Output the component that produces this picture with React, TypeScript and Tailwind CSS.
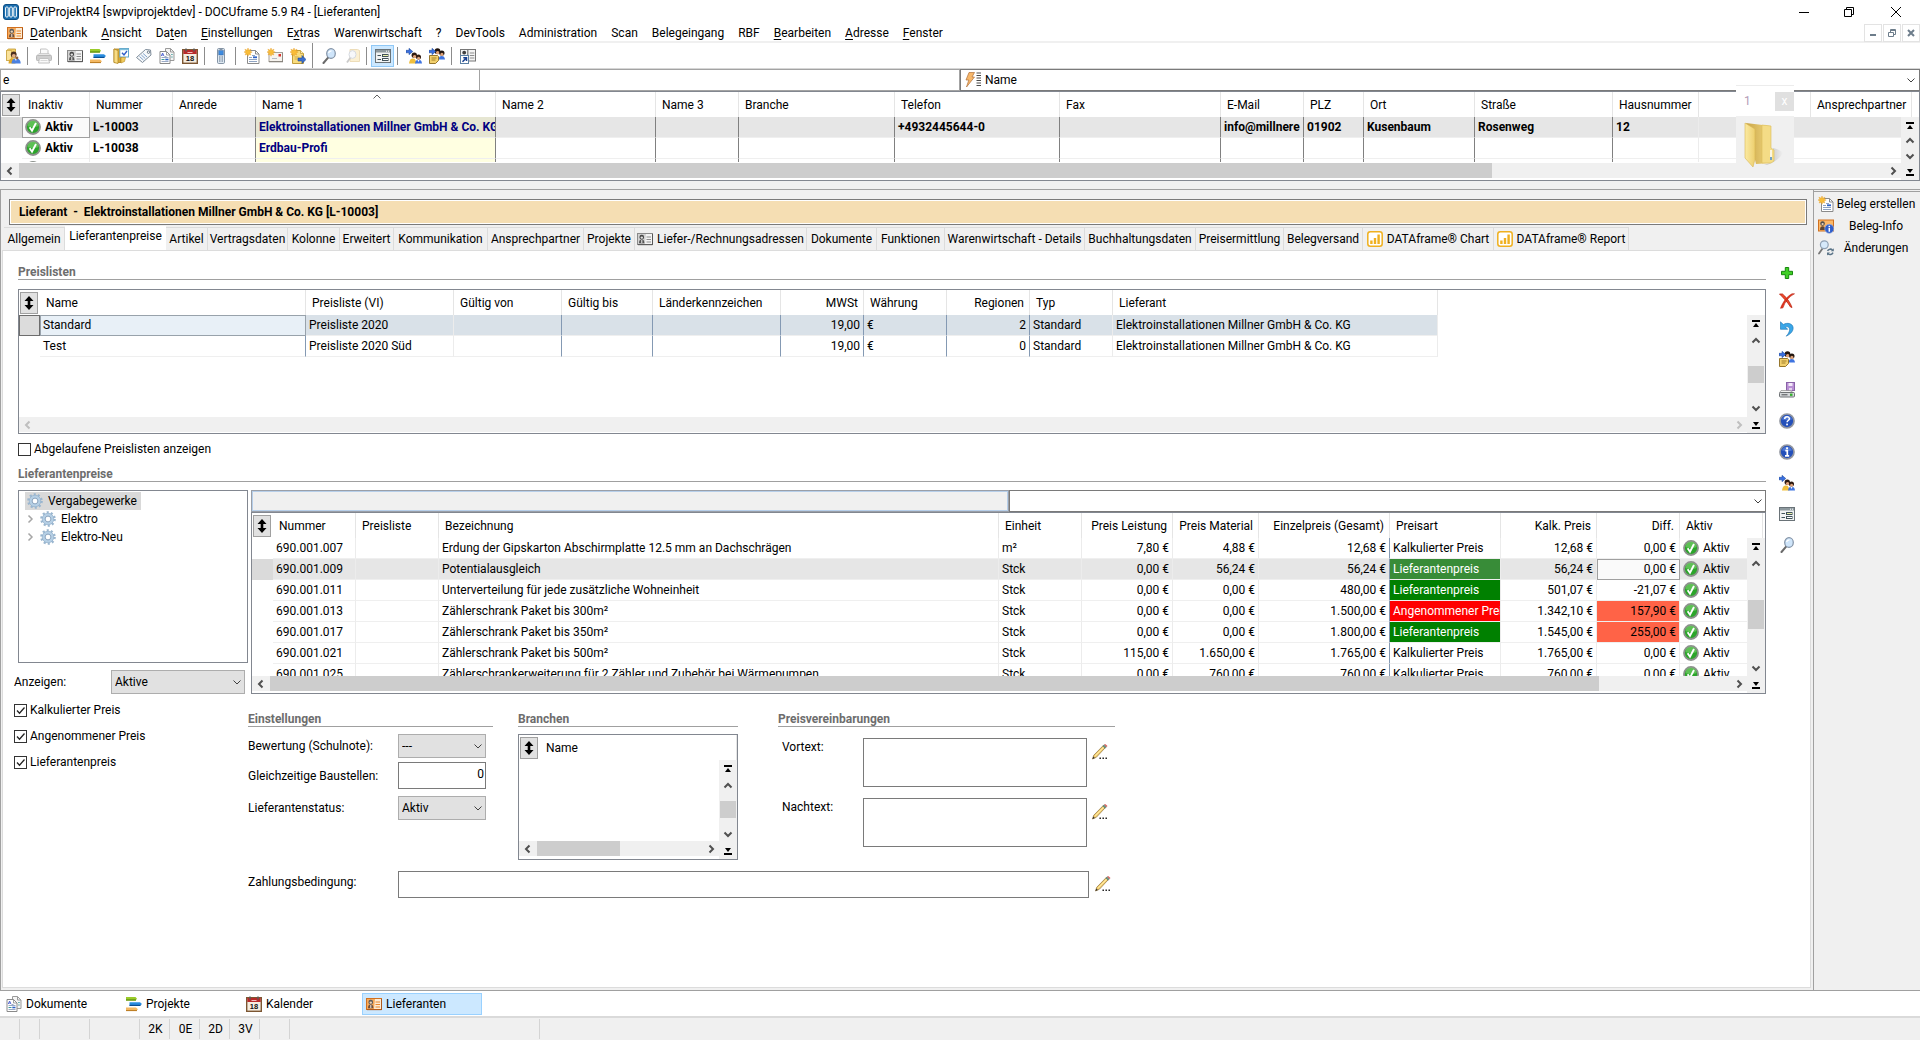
import { useId } from "react";
import type { ReactNode } from "react";

/* ---------- icons ---------- */

type IconProps = { children: ReactNode; size?: string; className?: string };

function Svg({ children, size = "size-4", className = "" }: IconProps) {
  return (
    <svg viewBox="0 0 16 16" aria-hidden="true" className={`${size} shrink-0 ${className}`}>
      {children}
    </svg>
  );
}

const AppIcon = () => (
  <Svg>
    <rect x="0.5" y="0.5" width="15" height="15" rx="2.5" fill="#1b6fb0" stroke="#0d4f86" />
    <rect x="2.6" y="3" width="2.6" height="10" rx="1" fill="#1b6fb0" stroke="#fff" strokeWidth="1" />
    <rect x="6.7" y="3" width="2.6" height="10" rx="1" fill="#1b6fb0" stroke="#fff" strokeWidth="1" />
    <rect x="10.8" y="3" width="2.6" height="10" rx="1" fill="#1b6fb0" stroke="#fff" strokeWidth="1" />
  </Svg>
);

const CardOrangeIcon = () => (
  <Svg>
    <rect x="0.5" y="2.5" width="15" height="11" fill="#fdebd3" stroke="#d0701f" />
    <path d="M1 3h8l-1 10H1z" fill="#f6a95a" />
    <rect x="2.500" y="3.800" width="4.500" height="4.700" rx="2" fill="#5c5c5c" />
    <path d="M2 12.300c0-2.800 1-3.800 2.700-3.800s2.700 1 2.700 3.800z" fill="#6b5040" />
    <circle cx="4.800" cy="6.600" r="1.200" fill="#ecd2b8" />
    <path d="M4.800 9v3" stroke="#f2e6da" />
    <path d="M9.500 6h4.500M9.500 8.500h4.500M9.500 11h4.500" stroke="#e8862c" />
    <path d="M1 13.700h14.500V3" fill="none" stroke="#a3521a" strokeWidth="0.800" />
  </Svg>
);

const CardIcon = () => (
  <Svg>
    <rect x="0.5" y="2.5" width="15" height="11" fill="#f4f4f4" stroke="#8a8a8a" />
    <path d="M1 3h8l-1 10H1z" fill="#d2d2d2" />
    <rect x="2.500" y="3.800" width="4.500" height="4.700" rx="2" fill="#484848" />
    <path d="M2 12.300c0-2.800 1-3.800 2.700-3.800s2.700 1 2.700 3.800z" fill="#555" />
    <circle cx="4.800" cy="6.600" r="1.200" fill="#e2e2e2" />
    <path d="M4.800 9v3" stroke="#eee" />
    <path d="M9.500 6h4.500M9.500 8.500h4.500M9.500 11h4.500" stroke="#8d8d8d" />
    <path d="M1 13.700h14.500V3" fill="none" stroke="#4e4e4e" strokeWidth="0.900" />
  </Svg>
);

const UserFolderIcon = () => (
  <Svg>
    <path d="M1.500 2.500l2-1.500h7v11.500h-9z" fill="#f3d06a" stroke="#c19a35" strokeWidth="0.800" />
    <path d="M1.500 2.500h5v10h-5z" fill="#fae29a" stroke="#c19a35" strokeWidth="0.600" />
    <path d="M3.500 15.500c.3-4 1.500-5 3.500-5s3 1 3.500 5z" fill="#dca62c" />
    <circle cx="8.700" cy="6.500" r="2.900" fill="#4a2f20" />
    <circle cx="8.800" cy="7.800" r="1.900" fill="#e3ae83" />
    <path d="M6.500 15.500c.3-4 2-5 4.500-5s4.500 1 4.700 5z" fill="#4a80e0" />
    <path d="M9.500 10.500l1.500 2.500 1-2.500z" fill="#f4f4f4" />
    <circle cx="12" cy="10" r="1.400" fill="#8b5a3c" />
  </Svg>
);

const PrinterIcon = () => (
  <Svg>
    <path d="M4.500 6V1h6l1.500 1.500V6" fill="#fafafa" stroke="#c2c2c2" />
    <path d="M1 7.500L3 5.500h10l2 2z" fill="#e6e6e6" stroke="#c2c2c2" strokeWidth="0.700" />
    <rect x="0.500" y="7.500" width="15" height="5" rx="0.800" fill="#cfcfcf" stroke="#b8b8b8" />
    <path d="M3.500 10.500h9l1 4.500h-11z" fill="#fafafa" stroke="#c2c2c2" />
    <path d="M4.500 12.500h7" stroke="#d9d9d9" />
  </Svg>
);

const GanttIcon = () => (
  <Svg>
    <path d="M0 1h9.500l1.500 1.800-1.500 1.700H0z" fill="#9acb2a" />
    <path d="M0 4h10" stroke="#5d8a0d" strokeWidth="1.200" />
    <path d="M3.500 6.200h10.500l2 1.800-2 1.800H3.500z" fill="#2a8de0" />
    <path d="M3.500 9.400h11" stroke="#0b4f93" strokeWidth="1.200" />
    <path d="M0 11.500h10l2 1.700-2 1.800H0z" fill="#f3b862" />
    <path d="M0 14.600h11" stroke="#b97a1f" />
  </Svg>
);

const FolderCheckIcon = () => (
  <Svg>
    <path d="M1 1h7v13.500H1z" fill="#d9aa38" stroke="#a87f22" strokeWidth="0.800" />
    <path d="M1 1l4 1.500v13L1 14.500z" fill="#f8dc85" stroke="#b58a24" strokeWidth="0.800" />
    <rect x="6.800" y="0.500" width="8.700" height="8.500" fill="#fff" stroke="#62a5c9" />
    <path d="M7 1.500h8.500" stroke="#7fc0dc" strokeWidth="1.400" />
    <path d="M9 4.700l2 2.300 3-4" fill="none" stroke="#2f5ec9" strokeWidth="1.400" />
    <path d="M8 9.500h4.500l-1 4-3.500 1.500z" fill="#f0cb5c" stroke="#b58a24" strokeWidth="0.600" />
  </Svg>
);

const TagIcon = () => (
  <Svg>
    <path d="M9.500 1.500l5 .5.500 5L6.500 14.500l-6-5z" fill="#f6f8fa" stroke="#7d8b99" />
    <circle cx="12.500" cy="4.200" r="1.200" fill="#fff" stroke="#6a7a8a" />
    <path d="M3.500 8.500l4 3.600M5.300 7l4 3.600M7.100 5.500l4 3.600" stroke="#7fa2cc" />
  </Svg>
);

const DocsIcon = () => (
  <Svg>
    <path d="M6.500.5h5l3.500 3.500v8.500H6.500z" fill="#f4f4f4" stroke="#9a9a9a" />
    <path d="M11.500.5V4H15" fill="none" stroke="#9a9a9a" />
    <path d="M1 3.500h6.500l3.500 3.500v8.500H1z" fill="#fff" stroke="#8a8a8a" />
    <path d="M7.500 3.500V7H11" fill="none" stroke="#8a8a8a" strokeWidth="0.800" />
    <path d="M2.300 8l1.300-3 1.300 3M2.800 7h1.600" fill="none" stroke="#4a5fd0" strokeWidth="0.900" />
    <path d="M5.500 8.500h2M2.500 9.500h7M2.500 13.500h7" stroke="#9aa9c4" />
    <path d="M2.500 11.500h3" stroke="#3a9a9a" />
    <path d="M6.300 11.500h3.200" stroke="#2c62c8" strokeWidth="1.600" />
    <path d="M12.200 6.500h1.500M12.200 9h1.500" stroke="#51a3a3" />
  </Svg>
);

const CalendarIcon = () => (
  <Svg>
    <rect x="0.700" y="1.700" width="14.600" height="13.600" fill="#f5ede0" stroke="#7c5632" strokeWidth="1.400" />
    <rect x="1.300" y="2" width="13.400" height="4" fill="#b82a2a" />
    <path d="M4 .5v3M12 .5v3" stroke="#5b5b5b" strokeWidth="1.500" />
    <path d="M5.500 4.500h5" stroke="#f2b9b9" />
    <text x="8" y="13" textAnchor="middle" fontSize="7.500" fontWeight="bold" fontFamily="Liberation Sans, sans-serif" fill="#111">
      18
    </text>
  </Svg>
);

const PhoneIcon = () => (
  <Svg>
    <rect x="4.500" y="0.500" width="7" height="15" rx="1.200" fill="#dfe9f2" stroke="#8494a5" />
    <path d="M6.500 1.500h3" stroke="#8494a5" />
    <rect x="5.800" y="2.700" width="4.400" height="4.300" fill="#3d8be0" stroke="#2c5c99" strokeWidth="0.500" />
    <path d="M6 9h1M7.500 9h1M9 9h1M6 11h1M7.500 11h1M9 11h1M6 13h1M7.500 13h1M9 13h1" stroke="#5d7288" />
  </Svg>
);

const Star = () => (
  <path d="M4 0l.8 2.200L7 1.200l-1 2.100 2.200.7-2.200.9.9 2.100-2.100-.8L4 8.200l-.8-2L1.100 7l.9-2.100L0 4l1.900-.7-1-2.100 2.300 1z" fill="#f9bd38" stroke="#e69a1c" strokeWidth="0.400" />
);

const NewDocIcon = () => (
  <Svg>
    <path d="M3.500 2.500h8l3.500 3.500v9.500H3.500z" fill="#fff" stroke="#8b8b8b" />
    <path d="M11.500 2.500V6H15" fill="none" stroke="#8b8b8b" />
    <path d="M8 7.500h3M5 9.500h3M5 11.500h8M5 13.500h8" stroke="#8ea3c2" />
    <path d="M9 9.300h4" stroke="#2c62c8" strokeWidth="1.800" />
    <Star />
  </Svg>
);

const NewMailIcon = () => (
  <Svg>
    <rect x="2" y="4.500" width="13.500" height="9" fill="#f6f3ee" stroke="#a5a19a" />
    <path d="M2 13.800h14V5" fill="none" stroke="#77736c" strokeWidth="0.800" />
    <rect x="11.500" y="6" width="2.500" height="2.500" fill="#d8352c" />
    <path d="M5 10.500h5" stroke="#b3bac2" />
    <Star />
  </Svg>
);

const NewNoteIcon = () => (
  <Svg>
    <path d="M2.500 2.500h8l3 3v10h-11z" fill="#f8dc7e" stroke="#c29d3b" />
    <path d="M10.500 2.500v3h3" fill="#fff1b8" stroke="#c29d3b" strokeWidth="0.800" />
    <path d="M4.500 9h4M4.500 11h3" stroke="#d1aa45" />
    <path d="M8 10h4V7.500l4 4-4 4V13H8z" fill="#3b6fd0" stroke="#1d468f" strokeWidth="0.600" />
    <Star />
  </Svg>
);

const MagnifierIcon = () => (
  <Svg>
    <path d="M7.300 9.300L2.500 15" stroke="#6a6a6a" strokeWidth="2" strokeLinecap="round" />
    <ellipse cx="10" cy="5.500" rx="4.300" ry="4.800" fill="#cfe5fa" stroke="#8292a6" strokeWidth="1.200" />
    <path d="M7.500 5c.5-1.500 1.500-2.200 3-2.200" fill="none" stroke="#fff" strokeWidth="1.200" />
  </Svg>
);

const DocSearchIcon = () => (
  <Svg className="opacity-45">
    <path d="M6 1.500h7.500l2 1v11H6z" fill="#f7dfa0" stroke="#d9b566" />
    <path d="M6.500 9.500L3 14.500" stroke="#8b8b8b" strokeWidth="1.800" />
    <ellipse cx="8.500" cy="6.500" rx="3.500" ry="3.900" fill="#eef1f5" stroke="#a5aebb" />
  </Svg>
);

const FormIcon = () => (
  <Svg>
    <rect x="0.500" y="1.500" width="15" height="13" fill="#f1f3f3" stroke="#6a7378" />
    <rect x="1" y="2" width="14" height="2.500" fill="#8d999e" />
    <path d="M11 3.200h1M13 3.200h1" stroke="#fff" />
    <path d="M2.500 7.500h3.500M2.500 11.500h3.500" stroke="#41525a" />
    <rect x="7.500" y="6.500" width="5.500" height="2" fill="#e9f0a8" stroke="#41525a" />
    <rect x="7.500" y="10.500" width="5.500" height="2" fill="#fff" stroke="#41525a" />
  </Svg>
);

const BlueArrow = () => <path d="M0 2.300h3V.3l3.800 3.200L3 6.700V4.800H0z" fill="#3a6fe0" stroke="#17408f" strokeWidth="0.500" />;

const ArrowPeopleIcon = () => (
  <Svg>
    <BlueArrow />
    <circle cx="8.300" cy="7.300" r="2.700" fill="#2e1a10" />
    <circle cx="8.600" cy="8.600" r="1.700" fill="#dda27a" />
    <circle cx="12.500" cy="9" r="2.500" fill="#2e1a10" />
    <circle cx="12.600" cy="10.200" r="1.500" fill="#dda27a" />
    <path d="M3 15.500c.5-4 2-5 4-5s3 1.500 3.500 5z" fill="#f0bf3c" />
    <path d="M9 15.500c.3-2.800 1.500-3.800 3.500-3.800s3.200 1 3.500 3.800z" fill="#3f74e0" />
    <path d="M11.500 11.900l1 2 1-2z" fill="#fff" />
  </Svg>
);

const ArrowPeopleNoteIcon = () => (
  <Svg>
    <circle cx="8.500" cy="3.200" r="2.900" fill="#20130c" />
    <circle cx="8.700" cy="4.700" r="1.800" fill="#dda27a" />
    <circle cx="12.900" cy="5" r="2.600" fill="#20130c" />
    <circle cx="12.900" cy="6.400" r="1.600" fill="#dda27a" />
    <path d="M9.500 11.500c.3-2.500 1.300-3.500 3.200-3.500s3 1 3.300 3.500z" fill="#3f74e0" />
    <path d="M0.500 7.500h8l1 1v4l-3 3h-6z" fill="#f2d06c" stroke="#8a6a1e" strokeWidth="0.900" />
    <path d="M2.500 10h5M2.500 12h4" stroke="#a27e28" />
    <BlueArrow />
  </Svg>
);

const CardLinkIcon = () => (
  <Svg>
    <rect x="0.500" y="1.500" width="15" height="11.500" fill="#f4f4f4" stroke="#777" />
    <path d="M7 2h1.500v11H7z" fill="#8d8d8d" />
    <rect x="2.300" y="2.700" width="3.800" height="3.800" rx="1.800" fill="#404040" />
    <path d="M9.800 5h4.500M9.800 7.500h4.500M9.800 10h4.500" stroke="#8d8d8d" />
    <rect x="0.500" y="7.500" width="8" height="8" fill="#fff" stroke="#5a7fa3" />
    <path d="M2.500 13.800l3.500-3.600M3.300 9.700h3.200v3.200" fill="none" stroke="#173f8f" strokeWidth="1.500" />
  </Svg>
);

const BoltIcon = () => (
  <Svg>
    <path d="M4 .5h5.500L7 5h2.500L1.500 15l2.300-7H1z" fill="#f7b76a" stroke="#b0703a" strokeWidth="0.700" />
    <path d="M11.500 1h4.500M11.500 3.500h4.500M11.500 6h4.500M11.500 8.500h4.500M11.500 11h4.500M11.500 13.500h4.500" stroke="#4a4a4a" />
  </Svg>
);

const CheckIcon = () => (
  <Svg>
    <circle cx="8" cy="8" r="7" fill="#2ba52a" stroke="#8c918c" strokeWidth="1.800" />
    <path d="M2.500 7a5.500 5.500 0 0 1 11 0c-3 1.500-8 1.500-11 0z" fill="#7fd272" opacity="0.600" />
    <path d="M4.600 8.300l2.400 3.400 4-7.700" fill="none" stroke="#fff" strokeWidth="1.900" />
  </Svg>
);

const GearIcon = () => (
  <Svg>
    <circle cx="8" cy="8" r="6.500" fill="none" stroke="#9ab6cf" strokeWidth="2.600" strokeDasharray="2 2.084" />
    <circle cx="8" cy="8" r="4.500" fill="none" stroke="#b5cfe5" strokeWidth="2.800" />
    <circle cx="8" cy="8" r="5.800" fill="none" stroke="#8eabc6" strokeWidth="0.600" />
    <circle cx="8" cy="8" r="2.900" fill="#fff" stroke="#7d9ab8" strokeWidth="0.900" />
  </Svg>
);

const PlusIcon = () => (
  <Svg>
    <path d="M6.300 2.500h3.400v3.800h3.800v3.400H9.700v3.800H6.300V9.700H2.500V6.300h3.800z" fill="#3fd025" stroke="#17860d" />
  </Svg>
);

const DeleteIcon = () => (
  <Svg>
    <path d="M.5 1h3C6 3 11 8.500 13 14.500l-1.500-.5C8.500 9 4.500 5 .5 1z" fill="#ee4a2c" stroke="#b92312" strokeWidth="0.800" />
    <path d="M15.500.8C10 3.500 6 8.500 4 14.800L1.500 15.300C4 8.500 8.500 3 13 .8z" fill="#e2331c" stroke="#b92312" strokeWidth="0.600" />
  </Svg>
);

const UndoIcon = () => (
  <Svg>
    <path d="M1.500.8v7.500h7.200L6.200 5.800c3-.8 4.800 1 4.300 3.700-.4 2-1.500 3.700-3.300 5.700C12 13 14.800 9.500 14 6 13.200 2.500 8.500 1.200 4.300 3.500z" fill="#3aa6e8" stroke="#1670b0" strokeWidth="0.600" />
  </Svg>
);

const SavePrintIcon = () => (
  <Svg>
    <rect x="7.500" y="0.500" width="8" height="8" fill="#b98fd4" stroke="#8a63a8" />
    <rect x="9.500" y="1" width="4" height="3" fill="#f3e9f9" />
    <rect x="10" y="6" width="3" height="2.500" fill="#e4d3ee" />
    <path d="M2 8.500h9l4 2.500H.5z" fill="#f1f1f1" stroke="#8c8c8c" strokeWidth="0.700" />
    <rect x="0.500" y="10.500" width="15" height="4.500" rx="1" fill="#d5d8da" stroke="#6f7376" />
    <path d="M2.500 12.800h6" stroke="#4b4f52" />
    <rect x="11" y="11.600" width="2.500" height="2.300" fill="#31b02a" />
  </Svg>
);

const RoundIcon = ({ children }: { children: ReactNode }) => (
  <Svg>
    <circle cx="8" cy="8" r="7" fill="#2450ba" stroke="#9296a0" strokeWidth="1.700" />
    <path d="M3 6.500a5.200 5.200 0 0 1 10 0c-3 1-7 1-10 0z" fill="#6d93e6" opacity="0.600" />
    {children}
  </Svg>
);

const HelpIcon = () => (
  <RoundIcon>
    <path d="M5.700 6c0-3 4.700-3 4.700-.2 0 1.700-2.300 1.700-2.300 3.400" fill="none" stroke="#fff" strokeWidth="1.500" />
    <rect x="7.200" y="10.600" width="1.700" height="1.700" fill="#fff" />
  </RoundIcon>
);

const InfoIcon = () => (
  <RoundIcon>
    <rect x="7.100" y="3.300" width="1.900" height="1.900" fill="#fff" />
    <path d="M6.300 6.600h2v5M6 11.900h4.200" fill="none" stroke="#fff" strokeWidth="1.700" />
  </RoundIcon>
);

const PencilIcon = () => (
  <Svg>
    <path d="M.5 15l1.300-3.800L11 1.800l2.200 2L4.300 13.300z" fill="#f6d272" stroke="#8a6a32" strokeWidth="0.700" />
    <path d="M3.300 11.800L11.700 3.200" stroke="#fff0b8" strokeWidth="0.800" />
    <path d="M10.800 2l1.300-1.300 2.300 2.100-1.300 1.400z" fill="#6f9a86" stroke="#4c6b5e" strokeWidth="0.500" />
    <path d="M12.200.7l1-.7L15.500 1.900l-1.100 1z" fill="#dc6464" />
    <path d="M.5 15l.8-2.500 1.600 1.600z" fill="#333" />
    <path d="M7.500 14.200h1.400M10.500 14.200h1.400M13.500 14.200h1.400" stroke="#111" strokeWidth="1.500" />
  </Svg>
);

const ChartIcon = () => (
  <Svg>
    <rect x="0.800" y="0.800" width="14.400" height="14.400" rx="2.500" fill="#fff" stroke="#efb01f" strokeWidth="1.500" />
    <rect x="3.200" y="9.500" width="2.400" height="3.500" fill="#efb01f" />
    <rect x="6.800" y="7" width="2.400" height="6" fill="#efb01f" />
    <rect x="10.400" y="3.500" width="2.400" height="9.500" fill="#efb01f" />
  </Svg>
);

const CardInfoIcon = () => (
  <Svg>
    <rect x="0.500" y="2" width="15" height="11" fill="#fbb869" stroke="#d0701f" />
    <rect x="2.300" y="3.300" width="4.500" height="4.500" rx="2" fill="#4f4f4f" />
    <circle cx="4.600" cy="6" r="1.100" fill="#ecd2b8" />
    <path d="M2 12c0-2.800 1-3.800 2.600-3.800s2.600 1 2.600 3.800z" fill="#5d4636" />
    <circle cx="11.300" cy="10.800" r="4.500" fill="#2f5ecb" stroke="#9fb2dd" strokeWidth="0.700" />
    <path d="M11.300 7.700v1.500M11.300 10v3.700" stroke="#fff" strokeWidth="1.500" />
  </Svg>
);

const SearchRefreshIcon = () => (
  <Svg>
    <path d="M4.500 8.500L1 13.500" stroke="#777" strokeWidth="1.800" strokeLinecap="round" />
    <circle cx="6.300" cy="4.700" r="3.900" fill="#d6e9fa" stroke="#8fa0b3" strokeWidth="1.200" />
    <path d="M9.500 10.800a3.200 3.200 0 0 1 5-.8M15 12.700a3.200 3.200 0 0 1-5 1" fill="none" stroke="#5a7488" strokeWidth="1.500" />
    <path d="M15.800 8.300v3h-3zM9 15.500v-3h3z" fill="#5a7488" />
  </Svg>
);

const FolderBigIcon = () => (
  <svg viewBox="0 0 42 46" aria-hidden="true" className="h-[46px] w-[42px]">
    <defs>
      <linearGradient id="folderBack" x1="0" x2="1">
        <stop offset="0" stopColor="#c9a548" />
        <stop offset="1" stopColor="#f3d980" />
      </linearGradient>
      <linearGradient id="folderFront" x1="0" x2="1">
        <stop offset="0" stopColor="#fbeaa2" />
        <stop offset="1" stopColor="#edcf6e" />
      </linearGradient>
      <linearGradient id="folderShade" x1="0" x2="1">
        <stop offset="0" stopColor="#b5b5b5" />
        <stop offset="1" stopColor="#f0f0f0" />
      </linearGradient>
    </defs>
    <path d="M20 43c6 0 15-5 19-12-3-3-6-4-10-5v14z" fill="url(#folderShade)" />
    <path d="M2 1l25 3v37l-15 1z" fill="url(#folderBack)" />
    <path d="M18 3l9 1v22l3 2v11l-3 2h-9z" fill="#f4dc86" stroke="#dcbd58" strokeWidth="0.600" />
    <path d="M1 1l10 6v30l-2 8-8-9z" fill="url(#folderFront)" stroke="#d8b651" strokeWidth="0.600" />
    <path d="M27 28v7" stroke="#fff" strokeWidth="1.500" />
    <path d="M27 35v3" stroke="#4a90d9" strokeWidth="1.500" />
  </svg>
);

const SortIcon = () => (
  <svg viewBox="0 0 10 14" aria-hidden="true" className="h-[14px] w-[10px]">
    <path d="M5 0l4.500 5H6.300v4H9.500L5 14 .5 9H3.700V5H.5z" fill="#000" />
  </svg>
);

type Dir = "up" | "down" | "left" | "right";
const chevronPaths: Record<Dir, string> = {
  up: "M1.500 6.500L5 3l3.500 3.500",
  down: "M1.500 3.500L5 7l3.500-3.500",
  left: "M6.500 1.500L3 5l3.500 3.500",
  right: "M3.500 1.500L7 5 3.500 8.500",
};

function Chevron({ dir, className = "stroke-[#505050] stroke-2" }: { dir: Dir; className?: string }) {
  return (
    <svg viewBox="0 0 10 10" aria-hidden="true" className={`size-[10px] shrink-0 fill-none ${className}`}>
      <path d={chevronPaths[dir]} />
    </svg>
  );
}

const JumpIcon = ({ end = false }: { end?: boolean }) => (
  <svg viewBox="0 0 8 8" aria-hidden="true" className="size-2">
    {end ? <path d="M0 6h8v2H0zM1 1h6L4 5z" /> : <path d="M0 0h8v2H0zM1 7h6L4 3z" />}
  </svg>
);

/* ---------- scroll bars and grid ---------- */

function VScroll({ thumb }: { thumb?: string }) {
  return (
    <div className="absolute right-0 bottom-0 top-[25px] flex w-[18px] flex-col bg-[#f0f0f0]">
      <button aria-label="Zum Anfang" className="flex h-[17px] shrink-0 items-center justify-center">
        <JumpIcon />
      </button>
      <button aria-label="Nach oben" className="flex h-[17px] min-h-0 shrink items-center justify-center">
        <Chevron dir="up" />
      </button>
      {thumb && (
        <div className="flex-1">
          <div className={`mx-px bg-[#cdcdcd] ${thumb}`} />
        </div>
      )}
      <button aria-label="Nach unten" className="flex h-[17px] min-h-0 shrink items-center justify-center">
        <Chevron dir="down" />
      </button>
      <button aria-label="Zum Ende" className="flex h-[17px] shrink-0 items-center justify-center">
        <JumpIcon end />
      </button>
    </div>
  );
}

function HScroll({ thumb, off = false }: { thumb?: string; off?: boolean }) {
  const tone = off ? "stroke-[#bfbfbf] stroke-2" : "stroke-[#505050] stroke-2";
  return (
    <div className="mr-[18px] flex h-[15px] bg-[#f0f0f0]">
      <button aria-label="Nach links" className="flex w-[18px] items-center justify-center">
        <Chevron dir="left" className={tone} />
      </button>
      <div className="flex-1">{thumb && <div className={`h-full bg-[#cdcdcd] ${thumb}`} />}</div>
      <button aria-label="Nach rechts" className="flex w-[17px] items-center justify-center">
        <Chevron dir="right" className={tone} />
      </button>
    </div>
  );
}

type Col = { label?: string; w?: string; right?: boolean; line?: string; sorted?: boolean };

const DARK = "border-r border-r-[#808080]";
const BLUE = "border-r border-r-[#8499b3]";
const LIGHT = "border-r border-r-[#ececec]";

type Row = { cells: ReactNode[]; selected?: boolean; focus?: number; tones?: Record<number, string> };

type GridProps = {
  cols: Col[];
  rows: Row[];
  body: string;
  rowTone?: string;
  focusTone?: string;
  selectorTone?: string;
  textClass?: string;
};

function Grid({
  cols,
  rows,
  body,
  rowTone = "bg-[#e6e6e6]",
  focusTone = "bg-[#fafafa] outline outline-1 -outline-offset-1 outline-[#a0a0a0]",
  selectorTone = "bg-[#dadada]",
  textClass = "",
}: GridProps) {
  return (
    <div className={`overflow-hidden ${body}`}>
      <table className="w-full table-fixed border-separate border-spacing-0">
        <colgroup>
          <col className="w-[21px]" />
          {cols.map((c, i) => (
            <col key={i} className={c.w ?? ""} />
          ))}
        </colgroup>
        <thead>
          <tr className="h-[25px]">
            <th className="p-0 pl-px">
              <button aria-label="Sortierung" className="flex h-[22px] w-[18px] items-center justify-center border border-[#a0a0a0] bg-[#e1e1e1]">
                <SortIcon />
              </button>
            </th>
            {cols.map((c, i) => (
              <th
                key={i}
                className={`relative p-0 font-normal whitespace-nowrap ${c.right ? "pr-[5px] text-right" : "pl-1.5 text-left"} ${c.label !== undefined ? "border-r border-r-[#e5e5e5]" : ""}`}
              >
                {c.sorted && <Chevron dir="up" className="absolute top-0 left-1/2 -ml-1 stroke-[#606060] stroke-1" />}
                {c.label}
              </th>
            ))}
          </tr>
        </thead>
        <tbody className={textClass}>
          {rows.map((r, ri) => (
            <tr key={ri} className={`h-[21px] ${r.selected ? "" : "bg-white"}`}>
              <td className={`p-0 ${r.selected ? selectorTone : ""}`} />
              {cols.map((c, i) => {
                const base = r.selected && c.label !== undefined ? rowTone : "";
                const tone = r.focus === i ? focusTone : (r.tones?.[i] ?? base);
                return (
                  <td
                    key={i}
                    className={`h-[21px] overflow-hidden p-0 whitespace-nowrap ${c.right ? "pr-[3px] text-right" : "pl-[3px]"} ${c.line ?? ""} ${c.label !== undefined ? "border-b border-b-[#efefef]" : ""} ${tone}`}
                  >
                    {r.cells[i]}
                  </td>
                );
              })}
            </tr>
          ))}
        </tbody>
      </table>
    </div>
  );
}

const Aktiv = () => (
  <span className="flex h-5 items-center gap-1">
    <CheckIcon />
    Aktiv
  </span>
);

/* ---------- small form parts ---------- */

function Select({ options, className, id, label, wrap = "" }: { options: string[]; className: string; id?: string; label?: string; wrap?: string }) {
  return (
    <div className={`relative ${wrap}`}>
      <select id={id} aria-label={label} className={`w-full appearance-none rounded-none pr-5 outline-none ${className}`}>
        {options.map((o) => (
          <option key={o}>{o}</option>
        ))}
      </select>
      <span className="pointer-events-none absolute inset-y-0 right-[3px] flex items-center">
        <Chevron dir="down" className="stroke-[#404040] stroke-1" />
      </span>
    </div>
  );
}

function Check({ children, checked = false }: { children: ReactNode; checked?: boolean }) {
  return (
    <label className="flex h-4 items-center gap-[3px]">
      <span className="relative flex size-[13px]">
        <input type="checkbox" defaultChecked={checked} className="peer size-[13px] appearance-none border border-[#333] bg-white" />
        <svg viewBox="0 0 13 13" aria-hidden="true" className="pointer-events-none absolute inset-0 hidden size-[13px] fill-none stroke-[#222] stroke-[1.3] peer-checked:block">
          <path d="M3 6.500l2.500 2.700L10.500 3.500" />
        </svg>
      </span>
      {children}
    </label>
  );
}

const Heading = ({ children }: { children: ReactNode }) => (
  <h2 className="h-[17px] border-b border-[#a0a0a0] leading-[18px] font-bold text-[#6d6d6d]">{children}</h2>
);

function TextBlock({ label }: { label: string }) {
  const id = useId();
  return (
    <div className="mt-[11px] flex items-start">
      <label htmlFor={id} className="w-[85px] pt-px pl-1">
        {label}
      </label>
      <textarea id={id} className="h-[49px] min-w-0 flex-1 resize-none border border-[#7a7a7a] outline-none" />
      <button aria-label={`${label} bearbeiten`} className="mt-1.5 mr-[7px] ml-[5px]">
        <PencilIcon />
      </button>
    </div>
  );
}

/* ---------- data ---------- */

const menu: [string, string, string][] = [
  ["", "D", "atenbank"],
  ["", "A", "nsicht"],
  ["Da", "t", "en"],
  ["", "E", "instellungen"],
  ["E", "x", "tras"],
  ["Warenwirtschaft", "", ""],
  ["?", "", ""],
  ["DevTools", "", ""],
  ["Administration", "", ""],
  ["Scan", "", ""],
  ["Belegeingang", "", ""],
  ["RBF", "", ""],
  ["", "B", "earbeiten"],
  ["", "A", "dresse"],
  ["", "F", "enster"],
];

const toolGroups: [string, () => ReactNode][][] = [
  [["Benutzer", UserFolderIcon]],
  [["Drucken", PrinterIcon]],
  [
    ["Adressen", CardIcon],
    ["Projekte", GanttIcon],
    ["Aufgaben", FolderCheckIcon],
    ["Etiketten", TagIcon],
    ["Dokumente", DocsIcon],
    ["Kalender", CalendarIcon],
  ],
  [["Telefon", PhoneIcon]],
  [
    ["Neues Dokument", NewDocIcon],
    ["Neue E-Mail", NewMailIcon],
    ["Neue Notiz", NewNoteIcon],
  ],
  [
    ["Suchen", MagnifierIcon],
    ["Dokument suchen", DocSearchIcon],
  ],
  [["Formular", FormIcon]],
  [
    ["Zuordnen", ArrowPeopleIcon],
    ["Notiz zuordnen", ArrowPeopleNoteIcon],
  ],
  [["Verknüpfung", CardLinkIcon]],
];

const supplierCols: Col[] = [
  { label: "Inaktiv", w: "w-[68px]", line: LIGHT },
  { label: "Nummer", w: "w-[83px]", line: DARK },
  { label: "Anrede", w: "w-[83px]", line: DARK },
  { label: "Name 1", w: "w-[240px]", line: DARK, sorted: true },
  { label: "Name 2", w: "w-[160px]", line: DARK },
  { label: "Name 3", w: "w-[83px]", line: DARK },
  { label: "Branche", w: "w-[156px]", line: DARK },
  { label: "Telefon", w: "w-[165px]", line: DARK },
  { label: "Fax", w: "w-[161px]", line: DARK },
  { label: "E-Mail", w: "w-[83px]", line: DARK },
  { label: "PLZ", w: "w-[60px]", line: DARK },
  { label: "Ort", w: "w-[111px]", line: DARK },
  { label: "Straße", w: "w-[138px]", line: DARK },
  { label: "Hausnummer", w: "w-[86px]", line: LIGHT },
  { label: "", w: "w-[112px]" },
  { label: "Ansprechpartner", w: "w-[101px]" },
  {},
];

const supplierRows: Row[] = [
  {
    selected: true,
    focus: 0,
    tones: { 3: "bg-[#e6e6d2] text-[#000080]" },
    cells: [<Aktiv key="a" />, "L-10003", "", "Elektroinstallationen Millner GmbH & Co. KG", "", "", "", "+4932445644-0", "", "info@millnere", "01902", "Kusenbaum", "Rosenweg", "12"],
  },
  { tones: { 3: "bg-[#ffffe1] text-[#000080]" }, cells: [<Aktiv key="a" />, "L-10038", "", "Erdbau-Profi"] },
  { tones: { 3: "bg-[#ffffe1]" }, cells: [<span key="a" className="flex h-5 items-center"><CheckIcon /></span>] },
];

const listCols: Col[] = [
  { label: "Name", w: "w-[266px]", line: BLUE },
  { label: "Preisliste (VI)", w: "w-[148px]", line: LIGHT },
  { label: "Gültig von", w: "w-[108px]", line: BLUE },
  { label: "Gültig bis", w: "w-[91px]", line: BLUE },
  { label: "Länderkennzeichen", w: "w-[128px]", line: BLUE },
  { label: "MWSt", w: "w-[83px]", right: true, line: BLUE },
  { label: "Währung", w: "w-[83px]", line: BLUE },
  { label: "Regionen", w: "w-[83px]", right: true, line: BLUE },
  { label: "Typ", w: "w-[83px]", line: LIGHT },
  { label: "Lieferant", w: "w-[325px]", line: LIGHT },
  {},
];

const supplier = "Elektroinstallationen Millner GmbH & Co. KG";
const listRows: Row[] = [
  { selected: true, focus: 0, cells: ["Standard", "Preisliste 2020", "", "", "", "19,00", "€", "2", "Standard", supplier] },
  { cells: ["Test", "Preisliste 2020 Süd", "", "", "", "19,00", "€", "0", "Standard", supplier] },
];

const priceCols: Col[] = [
  { label: "Nummer", w: "w-[83px]", line: LIGHT },
  { label: "Preisliste", w: "w-[83px]", line: LIGHT },
  { label: "Bezeichnung", w: "w-[560px]", line: LIGHT },
  { label: "Einheit", w: "w-[83px]", line: LIGHT },
  { label: "Preis Leistung", w: "w-[91px]", right: true, line: LIGHT },
  { label: "Preis Material", w: "w-[86px]", right: true, line: LIGHT },
  { label: "Einzelpreis (Gesamt)", w: "w-[131px]", right: true, line: BLUE },
  { label: "Preisart", w: "w-[111px]", line: LIGHT },
  { label: "Kalk. Preis", w: "w-[96px]", right: true, line: LIGHT },
  { label: "Diff.", w: "w-[83px]", right: true, line: LIGHT },
  { label: "Aktiv", w: "w-[83px]" },
  {},
];

const GREEN = "bg-[#008000] text-white";
const RED = "bg-[#ff0000] text-white";
const TOMATO = "bg-[#ff6347]";

const price = (cells: string[], extra: Partial<Row> = {}): Row => ({
  ...extra,
  cells: [cells[0], "", ...cells.slice(1), <Aktiv key="a" />],
});

const priceRows: Row[] = [
  price(["690.001.007", "Erdung der Gipskarton Abschirmplatte 12.5 mm an Dachschrägen", "m²", "7,80 €", "4,88 €", "12,68 €", "Kalkulierter Preis", "12,68 €", "0,00 €"]),
  price(["690.001.009", "Potentialausgleich", "Stck", "0,00 €", "56,24 €", "56,24 €", "Lieferantenpreis", "56,24 €", "0,00 €"], {
    selected: true,
    focus: 9,
    tones: { 7: "bg-[#388c38] text-white" },
  }),
  price(["690.001.011", "Unterverteilung für jede zusätzliche Wohneinheit", "Stck", "0,00 €", "0,00 €", "480,00 €", "Lieferantenpreis", "501,07 €", "-21,07 €"], { tones: { 7: GREEN } }),
  price(["690.001.013", "Zählerschrank Paket bis 300m²", "Stck", "0,00 €", "0,00 €", "1.500,00 €", "Angenommener Preis", "1.342,10 €", "157,90 €"], { tones: { 7: RED, 9: TOMATO } }),
  price(["690.001.017", "Zählerschrank Paket bis 350m²", "Stck", "0,00 €", "0,00 €", "1.800,00 €", "Lieferantenpreis", "1.545,00 €", "255,00 €"], { tones: { 7: GREEN, 9: TOMATO } }),
  price(["690.001.021", "Zählerschrank Paket bis 500m²", "Stck", "115,00 €", "1.650,00 €", "1.765,00 €", "Kalkulierter Preis", "1.765,00 €", "0,00 €"]),
  price(["690.001.025", "Zählerschrankerweiterung für 2 Zähler und Zubehör bei Wärmepumpen", "Stck", "0,00 €", "760,00 €", "760,00 €", "Kalkulierter Preis", "760,00 €", "0,00 €"]),
];

const tabs: { label: string; w: string; icon?: ReactNode }[] = [
  { label: "Allgemein", w: "w-[61px]" },
  { label: "Lieferantenpreise", w: "w-[101px]" },
  { label: "Artikel", w: "w-[42px]" },
  { label: "Vertragsdaten", w: "w-[80px]" },
  { label: "Kolonne", w: "w-[52px]" },
  { label: "Erweitert", w: "w-[54px]" },
  { label: "Kommunikation", w: "w-[94px]" },
  { label: "Ansprechpartner", w: "w-[96px]" },
  { label: "Projekte", w: "w-[51px]" },
  { label: "Liefer-/Rechnungsadressen", w: "w-[172px]", icon: <CardIcon /> },
  { label: "Dokumente", w: "w-[70px]" },
  { label: "Funktionen", w: "w-[68px]" },
  { label: "Warenwirtschaft - Details", w: "w-[140px]" },
  { label: "Buchhaltungsdaten", w: "w-[111px]" },
  { label: "Preisermittlung", w: "w-[88px]" },
  { label: "Belegversand", w: "w-[79px]" },
  { label: "DATAframe® Chart", w: "w-[131px]", icon: <ChartIcon /> },
  { label: "DATAframe® Report", w: "w-[135px]", icon: <ChartIcon /> },
];

const sideTools: [string, string, ReactNode][] = [
  ["Hinzufügen", "h-7", <PlusIcon key="i" />],
  ["Löschen", "h-7", <DeleteIcon key="i" />],
  ["Rückgängig", "h-7", <UndoIcon key="i" />],
  ["Notiz zuordnen", "h-[31px]", <ArrowPeopleNoteIcon key="i" />],
  ["Speichern", "h-[31px]", <SavePrintIcon key="i" />],
  ["Hilfe", "h-[31px]", <HelpIcon key="i" />],
  ["Info", "h-[31px]", <InfoIcon key="i" />],
  ["Zuordnen", "h-[31px]", <ArrowPeopleIcon key="i" />],
  ["Formular", "h-[31px]", <FormIcon key="i" />],
  ["Suchen", "h-[31px]", <MagnifierIcon key="i" />],
];

const statusCells: [string, string][] = [
  ["", "w-5"],
  ["", "w-5"],
  ["", "w-[50px]"],
  ["", "w-[50px]"],
  ["2K", "w-[30px]"],
  ["0E", "w-[30px]"],
  ["2D", "w-[30px]"],
  ["3V", "w-[30px]"],
  ["", "w-[30px]"],
  ["", "w-[250px]"],
];

/* ---------- page parts ---------- */

function TitleBar() {
  return (
    <header className="flex h-6 items-center pl-[3px]">
      <AppIcon />
      <h1 className="ml-1 flex-1">DFViProjektR4 [swpviprojektdev] - DOCUframe 5.9 R4 - [Lieferanten]</h1>
      <div className="flex h-5 items-center">
        <button aria-label="Minimieren" className="flex w-[45px] justify-center">
          <svg viewBox="0 0 10 10" className="size-[10px] fill-none stroke-black">
            <path d="M0 5.500h10" />
          </svg>
        </button>
        <button aria-label="Wiederherstellen" className="flex w-[46px] justify-center">
          <svg viewBox="0 0 10 10" className="size-[10px] fill-none stroke-black">
            <path d="M.5 2.500h7v7h-7zM2.500 2.500v-2h7v7h-2" />
          </svg>
        </button>
        <button aria-label="Schließen" className="flex w-12 justify-center">
          <svg viewBox="0 0 10 10" className="size-[10px] fill-none stroke-black">
            <path d="M0 0l10 10M10 0L0 10" />
          </svg>
        </button>
      </div>
    </header>
  );
}

function MenuBar() {
  const box = "flex h-[18px] w-[18px] items-center justify-center border border-[#e3e3e3]";
  return (
    <nav className="flex h-[19px] items-center border-b-2 border-[#f0f0f0] pl-[7px]">
      <CardOrangeIcon />
      <div className="flex flex-1">
        {menu.map(([a, u, b]) => (
          <button key={a + u + b} className="px-[7px]">
            {a}
            {u && <u className="underline-offset-2">{u}</u>}
            {b}
          </button>
        ))}
      </div>
      <div className="flex gap-px">
        <button aria-label="Fenster minimieren" className={box}>
          <svg viewBox="0 0 8 8" className="size-2 fill-none stroke-[#6d7d8b] stroke-2">
            <path d="M1 6h6" />
          </svg>
        </button>
        <button aria-label="Fenster wiederherstellen" className={box}>
          <svg viewBox="0 0 8 8" className="size-2 fill-none stroke-[#6d7d8b]">
            <path d="M.5 3.500h5v4h-5zM2.500 3.500v-3h5v5h-2M2.500 1.500h5" />
          </svg>
        </button>
        <button aria-label="Fenster schließen" className={box}>
          <svg viewBox="0 0 8 8" className="size-2 fill-none stroke-[#6d7d8b] stroke-2">
            <path d="M1 1l6 6M7 1L1 7" />
          </svg>
        </button>
      </div>
    </nav>
  );
}

function Toolbar() {
  return (
    <div className="flex h-[26px] items-center border-b border-[#d6d6d6] pl-px">
      {toolGroups.map((g, gi) => (
        <div key={gi} className="flex items-center">
          {gi > 0 && <span className={`mr-1 ml-[3px] w-px bg-[#8c8c8c] ${gi === 5 ? "h-[25px]" : "h-[18px]"}`} />}
          {g.map(([name, Icon]) => (
            <button
              key={name}
              aria-label={name}
              className={`flex h-[22px] w-[23px] items-center justify-center ${name === "Formular" ? "border border-[#90c8f6] bg-[#cce8ff]" : ""}`}
            >
              <Icon />
            </button>
          ))}
        </div>
      ))}
    </div>
  );
}

function SupplierList() {
  return (
    <section>
      <div className="flex h-[22px]">
        <input aria-label="Suche" defaultValue="e" className="w-1/4 border border-[#a3a3a3] px-0.5 outline-none" />
        <input aria-label="Suche 2" className="w-1/4 border border-l-0 border-[#a3a3a3] px-0.5 outline-none" />
        <div className="flex w-1/2 items-center gap-1 border border-[#7a7a7a] pl-1">
          <BoltIcon />
          <Select label="Suchfeld" options={["Name"]} className="h-5" wrap="flex-1" />
        </div>
      </div>
      <div className="relative border border-[#828790] pb-0.5">
        <Grid cols={supplierCols} rows={supplierRows} body="mb-px h-[70px]" textClass="font-bold" />
        <HScroll thumb="w-[79%]" />
        <VScroll />
        <div className="absolute -top-[7px] right-[125px] w-[58px]">
          <div className="flex h-[31px] items-center justify-between border-t border-[#ececec] bg-white pl-2 text-[#b49cb8]">
            1
            <button aria-label="Ablage schließen" className="size-[19px] bg-[#e0e0e0] leading-none text-white">
              x
            </button>
          </div>
          <div className="h-[47px] bg-[#f0f0f0] pt-1.5 pl-2">
            <FolderBigIcon />
          </div>
        </div>
      </div>
    </section>
  );
}

function Tree() {
  return (
    <ul className="ml-1 h-[173px] w-[230px] border border-[#828790] pt-px pl-1.5">
      <li>
        <button className="flex h-[18px] items-center gap-[5px] bg-[#d9d9d9] pr-1 pl-0.5">
          <GearIcon />
          Vergabegewerke
        </button>
        <ul>
          {["Elektro", "Elektro-Neu"].map((t) => (
            <li key={t}>
              <button className="flex h-[18px] items-center gap-[5px]">
                <Chevron dir="right" className="stroke-[#a6a6a6] stroke-[1.5]" />
                <GearIcon />
                {t}
              </button>
            </li>
          ))}
        </ul>
      </li>
    </ul>
  );
}

const greySelect = "h-6 border border-[#adadad] bg-[#e1e1e1] pl-[3px]";

function Settings() {
  return (
    <section className="w-[245px]">
      <Heading>Einstellungen</Heading>
      <div className="mt-[7px] flex items-center">
        <label htmlFor="rating" className="w-[150px]">
          Bewertung (Schulnote):
        </label>
        <Select id="rating" options={["---"]} className={greySelect} wrap="w-[88px]" />
      </div>
      <div className="mt-1 flex items-center">
        <label htmlFor="sites" className="w-[150px]">
          Gleichzeitige Baustellen:
        </label>
        <input id="sites" defaultValue="0" className="h-[27px] w-[88px] border border-[#7a7a7a] pr-px pb-1 text-right outline-none" />
      </div>
      <div className="mt-[7px] flex items-center">
        <label htmlFor="status" className="w-[150px]">
          Lieferantenstatus:
        </label>
        <Select id="status" options={["Aktiv"]} className={greySelect} wrap="w-[88px]" />
      </div>
    </section>
  );
}

function SupplierPrices() {
  return (
    <div className="mt-2 flex">
      <div className="w-[234px] shrink-0">
        <Tree />
        <div className="mt-[7px] flex items-center">
          <label htmlFor="show" className="w-[97px]">
            Anzeigen:
          </label>
          <Select id="show" options={["Aktive"]} className={greySelect} wrap="w-[134px]" />
        </div>
        <div className="mt-2 flex flex-col gap-2.5">
          <Check checked>Kalkulierter Preis</Check>
          <Check checked>Angenommener Preis</Check>
          <Check checked>Lieferantenpreis</Check>
        </div>
      </div>
      <div className="min-w-0 flex-1">
        <div className="ml-[3px] flex h-[22px]">
          <input aria-label="Filter" className="w-1/2 border border-[#9a9fa8] bg-[#f0f0f0] px-1 outline outline-1 -outline-offset-2 outline-[#b7cfea]" />
          <Select label="Filterfeld" options={[""]} className="h-[22px] border border-[#7a7a7a] pl-1" wrap="w-1/2" />
        </div>
        <div className="relative ml-[3px] border border-[#828790] pb-0.5">
          <Grid cols={priceCols} rows={priceRows} body="h-[163px]" />
          <HScroll thumb="w-[91%]" />
          <VScroll thumb="mt-7 h-[29px]" />
        </div>
        <div className="mt-4 flex">
          <Settings />
          <section className="ml-[25px] w-[220px]">
            <Heading>Branchen</Heading>
            <div className="relative mt-[7px] border border-[#828790] pb-[3px]">
              <Grid cols={[{ label: "Name" }]} rows={[]} body="h-[106px]" />
              <HScroll thumb="w-1/2" />
              <VScroll thumb="mt-[7px] h-[17px]" />
            </div>
          </section>
          <section className="ml-10 w-[337px]">
            <Heading>Preisvereinbarungen</Heading>
            <TextBlock label="Vortext:" />
            <TextBlock label="Nachtext:" />
          </section>
        </div>
        <div className="mt-[11px] flex items-start">
          <label htmlFor="terms" className="w-[150px] pt-[3px]">
            Zahlungsbedingung:
          </label>
          <input id="terms" className="h-[27px] w-[691px] border border-[#7a7a7a] px-1 outline-none" />
          <button aria-label="Zahlungsbedingung bearbeiten" className="mt-[5px] ml-1.5">
            <PencilIcon />
          </button>
        </div>
      </div>
    </div>
  );
}

export default function App() {
  return (
    <div className="flex min-h-screen flex-col bg-white font-[Roboto,sans-serif] text-xs leading-4 text-black">
      <TitleBar />
      <MenuBar />
      <Toolbar />
      <SupplierList />
      <div className="h-2 bg-[#f0f0f0]" />
      <div className="flex flex-1 border-t border-[#a0a0a0] bg-[#f0f0f0]">
        <main className="flex min-w-0 flex-1 flex-col border-l border-[#a0a0a0] pr-0.5 pb-0.5 pl-px">
          <div className="mx-[7px] mt-[9px] mr-1 h-[26px] border border-[#7a7a7a] bg-white p-px">
            <h2 className="h-full bg-[#f5deb3] pl-2 leading-[22px] font-bold whitespace-pre">
              {"Lieferant  -  Elektroinstallationen Millner GmbH & Co. KG [L-10003]"}
            </h2>
          </div>
          <div role="tablist" className="mt-px flex h-6 items-end pl-0.5">
            {tabs.map((t, i) => (
              <button
                key={t.label}
                role="tab"
                aria-selected={i === 1}
                className={`flex shrink-0 items-center justify-center gap-1 whitespace-nowrap ${t.w} ${
                  i === 1 ? "z-10 h-6 bg-white pb-1" : "h-[23px] border-t border-r border-[#dcdcdc]"
                }`}
              >
                {t.icon}
                {t.label}
              </button>
            ))}
          </div>
          <div className="flex flex-1 border border-[#dcdcdc] bg-white">
            <div className="min-w-0 flex-1 pl-[11px]">
              <div className="pt-3 pl-1">
                <Heading>Preislisten</Heading>
                <div className="relative mt-[9px] border border-[#828790] pb-px">
                  <Grid
                    cols={listCols}
                    rows={listRows}
                    body="h-[127px]"
                    rowTone="bg-[#d9e1e8]"
                    focusTone="bg-[#e8f0f7] outline outline-1 -outline-offset-1 outline-[#98a2ab]"
                    selectorTone="bg-[#dcdcdc] outline outline-1 -outline-offset-1 outline-[#6d6d6d]"
                  />
                  <HScroll off />
                  <VScroll thumb="mt-[17px] h-[17px]" />
                </div>
                <div className="mt-[7px]">
                  <Check>Abgelaufene Preislisten anzeigen</Check>
                </div>
                <div className="mt-2">
                  <Heading>Lieferantenpreise</Heading>
                </div>
              </div>
              <SupplierPrices />
            </div>
            <div className="flex w-11 flex-col items-center pt-2">
              {sideTools.map(([name, h, icon]) => (
                <button key={name} aria-label={name} className={`flex items-center ${h} pr-0.5`}>
                  {icon}
                </button>
              ))}
            </div>
          </div>
        </main>
        <aside className="w-[107px] border-l border-[#a0a0a0]">
          <div className="mt-px border-t border-[#a0a0a0] pt-px">
            {[
              { label: "Beleg erstellen", icon: <NewDocIcon /> },
              { label: "Beleg-Info", icon: <CardInfoIcon /> },
              { label: "Änderungen", icon: <SearchRefreshIcon /> },
            ].map((a) => (
              <button key={a.label} className="flex h-[22px] w-full items-center pr-0.5 pl-1">
                {a.icon}
                <span className="flex-1 text-center whitespace-nowrap">{a.label}</span>
              </button>
            ))}
          </div>
        </aside>
      </div>
      <nav className="flex h-[26px] items-center border-t border-[#a0a0a0] pl-0.5">
        {[
          { label: "Dokumente", icon: <DocsIcon /> },
          { label: "Projekte", icon: <GanttIcon /> },
          { label: "Kalender", icon: <CalendarIcon /> },
          { label: "Lieferanten", icon: <CardOrangeIcon />, active: true },
        ].map((t) => (
          <button
            key={t.label}
            className={`flex h-[22px] w-[120px] items-center gap-1 border pl-[3px] ${t.active ? "border-[#99d1ff] bg-[#cce8ff]" : "border-transparent"}`}
          >
            {t.icon}
            {t.label}
          </button>
        ))}
      </nav>
      <footer className="flex h-6 items-center border-t-2 border-[#dadada] bg-[#f0f0f0]">
        {statusCells.map(([text, w], i) => (
          <span key={i} className={`h-5 border-r border-[#d4d4d4] pl-0.5 text-center leading-5 ${w}`}>
            {text}
          </span>
        ))}
      </footer>
    </div>
  );
}
